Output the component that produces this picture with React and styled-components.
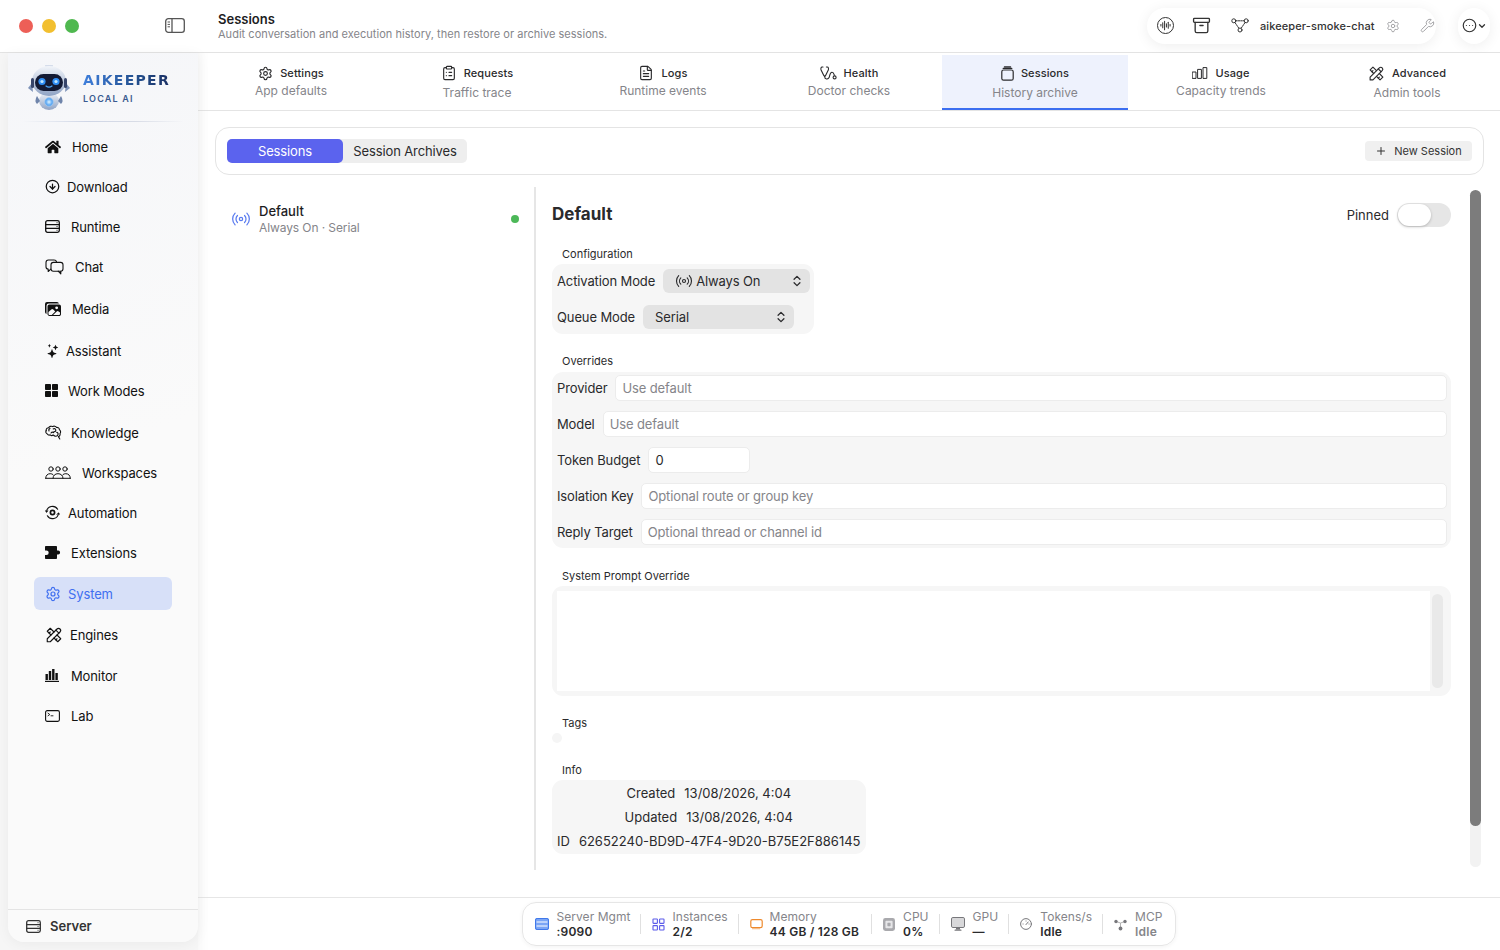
import React from "react";
import styled, { createGlobalStyle } from "styled-components";
import {
  Settings,
  ClipboardList,
  FileText,
  Plus,
  ChevronsUpDown,
  Radio,
  AudioLines,
  Archive,
  Wrench,
  CircleEllipsis,
  ChevronDown,
  CircleArrowDown,
} from "lucide-react";
import { FaHome } from "react-icons/fa";
import { IoImages } from "react-icons/io5";
import { BsStars } from "react-icons/bs";
import { TbTools } from "react-icons/tb";

const GlobalStyle = createGlobalStyle`
  html, body {
    margin: 0;
    height: 100%;
    overflow: hidden;
    background: #fff;
    font-family: Inter, "Liberation Sans", sans-serif;
    color: #1d1d1f;
  }
  * { box-sizing: border-box; }
`;

const Page = styled.div`
  height: 100vh;
  display: flex;
  flex-direction: column;
`;

const Header = styled.header`
  height: 53px;
  flex: none;
  display: flex;
  align-items: center;
  border-bottom: 1px solid #e3e3e3;
  padding: 0 10px 1px 19px;
  background: #fff;
`;

const Lights = styled.div`
  display: flex;
  gap: 9px;
  width: 146px;
`;

const Light = styled.span`
  width: 14px;
  height: 14px;
  border-radius: 50%;
  background: ${(p) => p.$color};
`;

const HeaderText = styled.div`
  margin-left: 33px;
  flex: 1;
`;

const HeaderTitle = styled.div`
  font-size: 13px;
  font-weight: 600;
  line-height: 16px;
`;

const HeaderSub = styled.div`
  font-size: 11px;
  line-height: 14px;
  letter-spacing: 0.03px;
  color: #85858a;
`;

const Pill = styled.div`
  height: 36px;
  display: flex;
  align-items: center;
  background: #fff;
  border-radius: 18px;
  box-shadow: 0 2px 14px rgba(0, 0, 0, 0.07);
`;

const ToolPill = styled(Pill)`
  width: 289px;
  padding-left: 10px;
  margin-right: 22px;
  color: #333;
`;

const MenuPill = styled(Pill)`
  width: 32px;
  justify-content: center;
  color: #333;
`;

const ChatName = styled.span`
  font-size: 11px;
  font-weight: 500;
  letter-spacing: 0.1px;
  margin: 0 11px 0 11px;
  color: #333;
`;

const CircleWave = styled.span`
  width: 17px;
  height: 17px;
  border-radius: 50%;
  border: 1.3px solid #333;
  display: flex;
  align-items: center;
  justify-content: center;
  margin-right: 18px;
`;

const ArchiveIcon = styled(Archive)`
  margin-right: 20px;
`;

const PillGear = styled(Settings)`
  margin-right: 20px;
`;

const Body = styled.div`
  flex: 1;
  min-height: 0;
  display: flex;
  background: #f6f6f6;
`;

const Sidebar = styled.aside`
  width: 190px;
  flex: none;
  margin: 0 0 8px 8px;
  display: flex;
  flex-direction: column;
  background: linear-gradient(160deg, #f5f6f9 0%, #fafafa 45%);
  border-radius: 0 0 16px 16px;
  box-shadow: 0 2px 14px rgba(0, 0, 0, 0.05);
  position: relative;
  z-index: 1;
`;

const Brand = styled.div`
  height: 68px;
  flex: none;
  display: flex;
  align-items: center;
  padding: 0 0 0 19px;
  gap: 12px;
`;

const BrandText = styled.div`
  display: flex;
  flex-direction: column;
  gap: 5px;
  margin-top: 2px;
`;

const BrandName = styled.span`
  font-family: "DejaVu Sans", Inter, sans-serif;
  font-size: 14px;
  line-height: 16px;
  font-weight: 700;
  letter-spacing: 1.3px;
  background: linear-gradient(90deg, #3f7fdc 0%, #23508f 60%, #1a2f63 100%);
  -webkit-background-clip: text;
  background-clip: text;
  color: transparent;
`;

const BrandTag = styled.span`
  font-size: 9px;
  line-height: 11px;
  font-weight: 600;
  letter-spacing: 1.2px;
  color: #3a5a90;
`;

const BrandRule = styled.div`
  height: 1px;
  flex: none;
  margin: 0 14px;
  background: linear-gradient(90deg, transparent, #cfd6e6 40%, #d8dce6 70%, transparent);
`;

const Nav = styled.nav`
  display: flex;
  flex-direction: column;
  padding: 8px 26px 0;
`;

const NavItem = styled.div`
  height: 33px;
  flex: none;
  margin-top: ${(p) => p.$gap}px;
  display: flex;
  align-items: center;
  gap: ${(p) => p.$iconGap}px;
  padding-left: 11px;
  border-radius: 6px;
  font-size: 13px;
  letter-spacing: -0.12px;
  color: ${(p) => (p.$active ? "#3f6ff0" : "#111")};
  background: ${(p) => (p.$active ? "#d7e0f8" : "transparent")};
`;

const SideFooter = styled.div`
  margin-top: auto;
  height: 33px;
  flex: none;
  border-top: 1px solid #e4e4e4;
  display: flex;
  align-items: center;
  gap: 9px;
  padding-left: 18px;
  font-size: 13px;
  font-weight: 600;
  color: #333;
`;

const Main = styled.main`
  flex: 1;
  min-width: 0;
  display: flex;
  flex-direction: column;
  background: #fff;
  box-shadow: inset 14px 0 14px -14px rgba(0, 0, 0, 0.05);
`;

const Tabs = styled.div`
  height: 58px;
  flex: none;
  display: grid;
  grid-template-columns: repeat(7, 186px);
  border-bottom: 1px solid #e4e4e4;
`;

const Tab = styled.div`
  margin-top: 2px;
  padding-top: 11px;
  height: 55px;
  display: flex;
  flex-direction: column;
  align-items: center;
  background: ${(p) => (p.$active ? "#eef2fd" : "transparent")};
  border-bottom: 2px solid ${(p) => (p.$active ? "#3b6ef0" : "transparent")};
`;

const TabTitle = styled.div`
  height: 14px;
  display: flex;
  align-items: center;
  gap: 7px;
  font-size: 11px;
  font-weight: 550;
  letter-spacing: 0.1px;
  color: #2a2a2c;
`;

const TabSub = styled.div`
  margin-top: ${(p) => (p.$low ? 6 : 4)}px;
  font-size: 12px;
  line-height: 14px;
  color: #85858a;
`;

const Content = styled.div`
  flex: 1;
  min-height: 0;
  padding: 16px 16px 0 17px;
  display: flex;
  flex-direction: column;
`;

const Toolbar = styled.div`
  height: 48px;
  flex: none;
  display: flex;
  align-items: center;
  justify-content: space-between;
  padding: 0 11px;
  border: 1px solid #e4e4e4;
  border-radius: 14px;
`;

const Segments = styled.div`
  display: flex;
  height: 24px;
  background: #eeeeee;
  border-radius: 5px;
`;

const Segment = styled.div`
  width: ${(p) => p.$width}px;
  display: flex;
  align-items: center;
  justify-content: center;
  font-size: 13px;
  letter-spacing: -0.12px;
  border-radius: 5px;
  background: ${(p) => (p.$active ? "#5b63ee" : "transparent")};
  color: ${(p) => (p.$active ? "#fff" : "#2a2a2c")};
`;

const NewButton = styled.div`
  width: 107px;
  height: 20px;
  display: flex;
  align-items: center;
  justify-content: center;
  gap: 7px;
  font-size: 11px;
  color: #333;
  background: #f0f0f0;
  border-radius: 4px;
`;

const Split = styled.div`
  margin-top: 12px;
  height: 683px;
  flex: none;
  display: flex;
`;

const ListPane = styled.div`
  width: 321px;
  flex: none;
  border-right: 2px solid #e6e6e6;
  padding: 15px 15px 0 16px;
`;

const SessionRow = styled.div`
  display: flex;
  align-items: center;
  gap: 8px;
`;

const SessionText = styled.div`
  flex: 1;
`;

const SessionName = styled.div`
  font-size: 13px;
  line-height: 18px;
  font-weight: 550;
`;

const SessionMeta = styled.div`
  font-size: 12px;
  line-height: 16px;
  letter-spacing: -0.1px;
  color: #85858a;
`;

const GreenDot = styled.span`
  width: 8px;
  height: 8px;
  border-radius: 50%;
  background: #4cb858;
`;

const Detail = styled.div`
  flex: 1;
  min-width: 0;
  padding: 16px 19px 0 16px;
`;

const DetailHead = styled.div`
  height: 24px;
  display: flex;
  align-items: center;
  gap: 8px;
`;

const DetailTitle = styled.div`
  flex: 1;
  margin-bottom: 2px;
  font-size: 17px;
  font-weight: 700;
  color: #2a2a2c;
`;

const PinLabel = styled.span`
  font-size: 13px;
  color: #2a2a2c;
`;

const Toggle = styled.div`
  width: 54px;
  height: 24px;
  padding: 1px;
  border-radius: 12px;
  background: #e6e6e6;
`;

const Knob = styled.div`
  width: 33px;
  height: 22px;
  border-radius: 11px;
  background: #fff;
  box-shadow: 0 1px 3px rgba(0, 0, 0, 0.22);
`;

const SectionLabel = styled.div`
  font-size: 11px;
  line-height: 14px;
  margin: ${(p) => p.$top}px 0 ${(p) => p.$after ?? 3}px 10px;
  color: #2a2a2c;
`;

const Group = styled.div`
  display: ${(p) => (p.$fit ? "inline-flex" : "flex")};
  flex-direction: column;
  gap: 4px;
  padding: ${(p) => (p.$fit ? "1px 0" : "0")};
  vertical-align: top;
  background: #f6f6f6;
  border-radius: 11px;
`;

const Row = styled.div`
  height: 32px;
  display: flex;
  align-items: center;
  gap: 8px;
  padding: 0 4px 0 5px;
  font-size: 13px;
  letter-spacing: -0.12px;
  color: #2a2a2c;
`;

const Select = styled.div`
  width: ${(p) => p.$width}px;
  height: 24px;
  display: flex;
  align-items: center;
  gap: 3px;
  padding: 0 6px 0 12px;
  border-radius: 6px;
  background: #e3e3e3;
  font-size: 13px;
  span { flex: 1; }
`;

const Field = styled.input`
  flex: ${(p) => (p.$narrow ? "none" : 1)};
  width: ${(p) => (p.$narrow ? "102px" : "auto")};
  min-width: 0;
  height: 26px;
  padding: 0 6px;
  border: 1px solid #ececec;
  border-radius: 5px;
  background: #fff;
  outline: none;
  font-family: inherit;
  font-size: 13px;
  letter-spacing: -0.12px;
  color: #2a2a2c;
  &::placeholder { color: #85858a; opacity: 1; }
`;

const PromptBox = styled.div`
  height: 110px;
  display: flex;
  gap: 2px;
  padding: 5px 8px 5px 5px;
  background: #f6f6f6;
  border-radius: 11px;
`;

const PromptArea = styled.textarea`
  flex: 1;
  border: none;
  resize: none;
  outline: none;
  background: #fff;
`;

const PromptScroll = styled.div`
  width: 11px;
  margin: 3px 0;
  border-radius: 6px;
  background: #e9e9e9;
`;

const TagDot = styled.div`
  width: 10px;
  height: 10px;
  border-radius: 50%;
  background: #f5f5f5;
`;

const InfoBox = styled.div`
  display: inline-flex;
  flex-direction: column;
  vertical-align: top;
  padding: 1px 5px;
  background: #f6f6f6;
  border-radius: 11px;
`;

const InfoRow = styled.div`
  height: 24px;
  display: flex;
  align-items: center;
  justify-content: center;
  gap: 9px;
  font-size: 13px;
  color: #2a2a2c;
`;

const ScrollTrack = styled.div`
  width: 11px;
  flex: none;
  height: 677px;
  margin: 3px 3px 0 0;
  border-radius: 6px;
  background: #f2f2f2;
`;

const ScrollThumb = styled.div`
  height: 636px;
  border-radius: 6px;
  background: #7c7c7c;
`;

const StatusBar = styled.footer`
  height: 53px;
  flex: none;
  margin-top: auto;
  border-top: 1px solid #e6e6e6;
  display: flex;
  justify-content: center;
  padding-top: 4px;
`;

const StatusPill = styled.div`
  height: 44px;
  display: flex;
  align-items: center;
  padding: 0 12px;
  border: 1px solid #e6e6e6;
  border-radius: 14px;
  box-shadow: 0 1px 4px rgba(0, 0, 0, 0.05);
`;

const StatusItem = styled.div`
  display: flex;
  align-items: center;
  gap: ${(p) => p.$gap}px;
`;

const StatusSep = styled.span`
  width: 1px;
  height: 20px;
  margin: 0 11px 0 ${(p) => p.$lead}px;
  background: #e0e0e0;
`;

const StatusText = styled.div`
  display: flex;
  flex-direction: column;
  font-size: 12px;
  line-height: 15px;
`;

const StatusLabel = styled.span`
  letter-spacing: 0.05px;
  color: #85858a;
`;

const StatusValue = styled.span`
  font-weight: 600;
  letter-spacing: 0.2px;
  color: ${(p) => (p.$muted ? "#85858a" : "#2a2a2c")};
`;

const IconSvg = styled.svg`
  flex: none;
`;

const FlippedStars = styled(BsStars)`
  flex: none;
  transform: scaleX(-1);
`;

const Glyph = ({ w = 16, h = 16, children, ...rest }) => (
  <IconSvg
    width={w}
    height={h}
    viewBox={`0 0 ${w} ${h}`}
    fill="none"
    stroke="currentColor"
    strokeWidth="1.3"
    strokeLinecap="round"
    strokeLinejoin="round"
    {...rest}
  >
    {children}
  </IconSvg>
);

const RobotLogo = () => (
  <IconSvg width="44" height="48" viewBox="0 0 44 48">
    <defs>
      <linearGradient id="shell" x1="0" y1="0" x2="0" y2="1">
        <stop offset="0" stopColor="#f2f5fa" />
        <stop offset="1" stopColor="#8fa3c4" />
      </linearGradient>
      <radialGradient id="core">
        <stop offset="0" stopColor="#dff4ff" />
        <stop offset="1" stopColor="#2f8ef0" />
      </radialGradient>
    </defs>
    <path d="M5 20 L1 25 L6 29Z" fill="#7e93b8" />
    <path d="M39 20 L43 25 L38 29Z" fill="#7e93b8" />
    <ellipse cx="22" cy="38" rx="10" ry="9" fill="url(#shell)" />
    <path d="M10 33 q-3 5 0 8 l3 -3z" fill="#6f84aa" />
    <path d="M34 33 q3 5 0 8 l-3 -3z" fill="#6f84aa" />
    <path d="M18 2 h8 l-1 5 h-6z" fill="#d5dcea" />
    <ellipse cx="22" cy="18" rx="17" ry="15" fill="url(#shell)" />
    <rect x="4" y="15" width="3" height="10" rx="1.5" fill="#37456a" />
    <rect x="37" y="15" width="3" height="10" rx="1.5" fill="#37456a" />
    <rect x="8" y="11" width="28" height="17" rx="8.5" fill="#131a34" />
    <circle cx="15" cy="18.5" r="3.6" fill="#2f8ef5" />
    <circle cx="15" cy="18.5" r="1.6" fill="#bfe6ff" />
    <circle cx="29" cy="18.5" r="3.6" fill="#2f8ef5" />
    <circle cx="29" cy="18.5" r="1.6" fill="#bfe6ff" />
    <path d="M19 23 q3 2.4 6 0" stroke="#4aa4f5" strokeWidth="1.2" fill="none" strokeLinecap="round" />
    <circle cx="22" cy="39" r="4.2" fill="url(#core)" stroke="#9fc8ef" />
  </IconSvg>
);

const RowsIcon = () => (
  <Glyph w={15} h={13}>
    <rect x="0.7" y="0.7" width="13.6" height="11.6" rx="1.8" />
    <path d="M0.7 4.6h13.6M0.7 8.4h13.6" />
    <path d="M12 2.7h.1M12 6.5h.1M12 10.3h.1" strokeWidth="1" />
  </Glyph>
);

const BubblesIcon = () => (
  <Glyph w={19} h={16} strokeWidth="1.1">
    <path d="M11.5 2.8C11.3 1.6 10.3 1 9 1H3.4C1.9 1 1 2 1 3.4v4.4c0 1.3.9 2.3 2.2 2.3v2.4l2.6-2.4" />
    <rect x="6" y="3.4" width="12" height="8.8" rx="2.4" />
    <path d="M13.2 12.2l2.6 2.6v-2.6" />
  </Glyph>
);

const GridIcon = () => (
  <IconSvg width="13" height="13" viewBox="0 0 13 13" fill="#111">
    <rect width="6" height="6" rx="0.8" />
    <rect x="7" width="6" height="6" rx="0.8" />
    <rect y="7" width="6" height="6" rx="0.8" />
    <rect x="7" y="7" width="6" height="6" rx="0.8" />
  </IconSvg>
);

const BrainIcon = () => (
  <Glyph w={17} h={15} strokeWidth="1.1">
    <path d="M1.2 5.6C.9 3.6 2.4 2.8 3.6 2.8 4.2 1.4 6.2.8 7.6 1.6c1.2-.8 3.2-.6 3.8.8 1.6-.2 3 .8 3 2.4 1.4.8 1.6 2.8.6 3.8.4 1.4-.4 2.8-1.6 3l1.4 2.4" />
    <path d="M1.2 5.6C.4 6.8 1 8.6 2.4 9c.4 1 1.8 1.4 2.8.8.8.8 2.2.8 3 .2 1 1 1.6 1.4 2.8 1.2 1.2-.2 2-.8 2-1.8" />
    <path d="M5 3.6c-1 .4-1.4 1.4-1 2.4M8.2 4c1-.8 2.6-.2 2.6 1.2 0 1.2-1 1.6-2 1.6M6 8c.6-.8 1.8-1 2.6-.4M11.8 7.4c.8 0 1.4.6 1.2 1.4" />
  </Glyph>
);

const PeopleIcon = () => (
  <Glyph w={26} h={13} strokeWidth="1">
    <circle cx="6" cy="3" r="2.2" />
    <circle cx="13" cy="3" r="2.2" />
    <circle cx="20" cy="3" r="2.2" />
    <path d="M0.7 12.3c0-3 2-4.6 4.5-4.6 1.4 0 2.6.5 3.3 1.4M8 12.3c0-3 2.2-4.6 5-4.6s5 1.6 5 4.6M17.5 9.1c.7-.9 1.9-1.4 3.3-1.4 2.5 0 4.5 1.6 4.5 4.6M.7 12.3h24.6" />
  </Glyph>
);

const AutomationIcon = () => (
  <Glyph w={15} h={15} strokeWidth="1.2">
    <path d="M1.5 6.8A6 6 0 0 1 12.6 4.2M13.5 8.2A6 6 0 0 1 2.4 10.8" />
    <path d="M0.3 5.6l1.2 1.5 1.4-1.3M12.1 9.4l1.4-1.4 1.2 1.4" strokeWidth="1" />
    <circle cx="7.5" cy="7.5" r="2.1" strokeWidth="1.7" />
  </Glyph>
);

const PuzzleIcon = () => (
  <IconSvg width="16" height="13" viewBox="0 0 16 13" fill="#111">
    <path d="M0.8 0h10.4c.4 0 .8.4.8.8V4.6h1.2a1.9 1.9 0 1 1 0 3.8H12v3.8c0 .4-.4.8-.8.8H.8a.8.8 0 0 1-.8-.8V9h1.4a2 2 0 1 0 0-4.6H0V.8C0 .4.4 0 .8 0z" />
  </IconSvg>
);

const BarsIcon = () => (
  <IconSvg width="14" height="13" viewBox="0 0 14 13" fill="#111">
    <rect x="0.5" y="5" width="2.4" height="6" />
    <rect x="3.8" y="2" width="2.4" height="9" />
    <rect x="7.1" y="0" width="2.4" height="11" />
    <rect x="10.4" y="4" width="2.4" height="7" />
    <rect y="11.8" width="14" height="1.2" />
  </IconSvg>
);

const TerminalIcon = () => (
  <Glyph w={15} h={12} strokeWidth="1.1">
    <rect x="0.6" y="0.6" width="13.8" height="10.8" rx="1.6" />
    <path d="M3 3.2l1.8 1.3L3 5.8M6 5.8h2" strokeWidth="0.9" />
  </Glyph>
);

const StackBoxIcon = () => (
  <Glyph w={13} h={15} strokeWidth="1.2">
    <rect x="0.8" y="4" width="11.4" height="10.2" rx="1.8" />
    <path d="M2.2 2.4h8.6M3.4 0.8h6.2" />
  </Glyph>
);

const UsageIcon = () => (
  <Glyph w={16} h={12} strokeWidth="1">
    <rect x="0.6" y="5" width="3.4" height="6.4" />
    <rect x="6" y="2.4" width="3.4" height="9" />
    <rect x="11.4" y="0.6" width="3.4" height="10.8" />
  </Glyph>
);

const HealthIcon = () => (
  <Glyph w={17} h={15} strokeWidth="1.1">
    <path d="M3 1H2.2C1 1 .6 2.5 1.1 4l2.7 5.6c.5 1 1.3 1 1.8 0L8.3 4c.5-1.5.1-3-1.1-3h-.8" />
    <path d="M4.7 10v.8c0 2.6 3.4 3 4.4.8.8-1.7.6-5.4 2.9-5.4 1.8 0 1.9 1.6 2.3 3" />
    <circle cx="14.6" cy="11.4" r="1.5" />
  </Glyph>
);

const NodesIcon = () => (
  <Glyph w={18} h={15} strokeWidth="1">
    <circle cx="2.8" cy="2.8" r="2" />
    <circle cx="15.2" cy="2.8" r="2" />
    <circle cx="9" cy="12" r="2" />
    <path d="M4.8 2.8h8.4M3.9 4.5l4 5.8M14.1 4.5l-4 5.8" strokeDasharray="1.5 1" />
  </Glyph>
);

const SidePanelIcon = () => (
  <Glyph w={20} h={15} color="#555">
    <rect x="0.7" y="0.7" width="18.6" height="13.6" rx="2.6" />
    <path d="M7 0.7v13.6" />
    <path d="M3 4h1.6M3 6.4h1.6M3 8.8h1.6" strokeWidth="1" />
  </Glyph>
);

const ServerBlueIcon = () => (
  <IconSvg width="14" height="12" viewBox="0 0 14 12">
    <rect width="14" height="12" rx="2" fill="#7ba5f5" />
    <path d="M1.5 4h11M1.5 8h11" stroke="#fff" strokeWidth="1" />
    <rect x="0.5" y="0.5" width="13" height="11" rx="1.6" fill="none" stroke="#3f78ea" />
  </IconSvg>
);

const InstancesIcon = () => (
  <Glyph w={13} h={13} strokeWidth="1.1" color="#5b5bea">
    <rect x="1" y="1" width="4.4" height="4.4" rx="0.6" />
    <rect x="7.6" y="1" width="4.4" height="4.4" rx="0.6" />
    <rect x="1" y="7.6" width="4.4" height="4.4" rx="0.6" />
    <rect x="7.6" y="7.6" width="4.4" height="4.4" rx="0.6" />
  </Glyph>
);

const MemoryIcon = () => (
  <Glyph w={13} h={12} strokeWidth="1.2" color="#ee8a2d">
    <rect x="0.8" y="1.6" width="11.4" height="8" rx="1.6" />
    <path d="M3 11v-1M5 11v-1M7 11v-1M9 11v-1" strokeWidth="0.8" />
  </Glyph>
);

const CpuIcon = () => (
  <IconSvg width="12" height="13" viewBox="0 0 12 13">
    <rect width="12" height="13" rx="2.4" fill="#a9a9ad" />
    <rect x="2.4" y="2.8" width="7.2" height="7.4" rx="1" fill="#e6e6e8" />
    <rect x="4.4" y="4.8" width="3.2" height="3.4" rx="0.6" fill="#a9a9ad" />
  </IconSvg>
);

const GpuIcon = () => (
  <IconSvg width="14" height="14" viewBox="0 0 14 14">
    <rect x="0.5" y="0.5" width="13" height="10" rx="1.4" fill="#d8d8da" stroke="#77777b" />
    <rect x="5" y="11" width="4" height="1.6" fill="#77777b" />
    <rect x="3.5" y="12.6" width="7" height="1.2" rx="0.6" fill="#77777b" />
  </IconSvg>
);

const GaugeIcon = () => (
  <Glyph w={12} h={12} strokeWidth="1" color="#77777b">
    <circle cx="6" cy="6" r="5.4" />
    <path d="M6 6.6l2.2-2.6" />
    <path d="M3 6h.1M6 3h.1M9 6h.1" />
  </Glyph>
);

const McpIcon = () => (
  <IconSvg width="13" height="13" viewBox="0 0 13 13">
    <path d="M2 3.5L6.5 5M11 3.5L6.5 5M6.5 5v5" stroke="#aaa" strokeWidth="0.9" fill="none" />
    <circle cx="2" cy="3.5" r="1.7" fill="#77777b" />
    <circle cx="11" cy="3.5" r="1.7" fill="#77777b" />
    <circle cx="6.5" cy="10.5" r="1.9" fill="#77777b" />
  </IconSvg>
);

const navItems = [
  { label: "Home", gap: 0, iconGap: 11, icon: <FaHome size={16} color="#111" /> },
  { label: "Download", gap: 7, iconGap: 7, icon: <CircleArrowDown size={15} color="#111" strokeWidth={2} /> },
  { label: "Runtime", gap: 7, iconGap: 11, icon: <RowsIcon /> },
  { label: "Chat", gap: 7, iconGap: 11, icon: <BubblesIcon /> },
  { label: "Media", gap: 9, iconGap: 11, icon: <IoImages size={16} color="#111" /> },
  { label: "Assistant", gap: 9, iconGap: 7, icon: <FlippedStars size={14} color="#111" /> },
  { label: "Work Modes", gap: 7, iconGap: 10, icon: <GridIcon /> },
  { label: "Knowledge", gap: 9, iconGap: 9, icon: <BrainIcon /> },
  { label: "Workspaces", gap: 7, iconGap: 11, icon: <PeopleIcon /> },
  { label: "Automation", gap: 7, iconGap: 8, icon: <AutomationIcon /> },
  { label: "Extensions", gap: 7, iconGap: 10, icon: <PuzzleIcon /> },
  { label: "System", gap: 8, iconGap: 7, active: true, icon: <Settings size={16} color="#3f6ff0" strokeWidth={1.8} /> },
  { label: "Engines", gap: 8, iconGap: 7, icon: <TbTools size={18} color="#111" strokeWidth={1.5} /> },
  { label: "Monitor", gap: 8, iconGap: 12, icon: <BarsIcon /> },
  { label: "Lab", gap: 7, iconGap: 11, icon: <TerminalIcon /> },
];

const tabs = [
  { title: "Settings", sub: "App defaults", icon: <Settings size={15} strokeWidth={1.8} /> },
  { title: "Requests", sub: "Traffic trace", low: true, icon: <ClipboardList size={16} strokeWidth={1.7} /> },
  { title: "Logs", sub: "Runtime events", icon: <FileText size={16} strokeWidth={1.7} /> },
  { title: "Health", sub: "Doctor checks", icon: <HealthIcon /> },
  { title: "Sessions", sub: "History archive", low: true, active: true, icon: <StackBoxIcon /> },
  { title: "Usage", sub: "Capacity trends", icon: <UsageIcon /> },
  { title: "Advanced", sub: "Admin tools", low: true, icon: <TbTools size={17} strokeWidth={1.6} /> },
];

const overrides = [
  { label: "Provider", placeholder: "Use default" },
  { label: "Model", placeholder: "Use default" },
  { label: "Token Budget", value: "0", narrow: true },
  { label: "Isolation Key", placeholder: "Optional route or group key" },
  { label: "Reply Target", placeholder: "Optional thread or channel id" },
];

const info = [
  ["Created", "13/08/2026, 4:04"],
  ["Updated", "13/08/2026, 4:04"],
  ["ID", "62652240-BD9D-47F4-9D20-B75E2F886145"],
];

const stats = [
  { label: "Server Mgmt", value: ":9090", gap: 7, lead: 10, icon: <ServerBlueIcon /> },
  { label: "Instances", value: "2/2", gap: 7, lead: 10, icon: <InstancesIcon /> },
  { label: "Memory", value: "44 GB / 128 GB", gap: 7, lead: 10, icon: <MemoryIcon /> },
  { label: "CPU", value: "0%", gap: 8, lead: 12, icon: <CpuIcon /> },
  { label: "GPU", value: "—", gap: 8, lead: 10, icon: <GpuIcon /> },
  { label: "Tokens/s", value: "Idle", gap: 8, lead: 10, icon: <GaugeIcon /> },
  { label: "MCP", value: "Idle", gap: 8, lead: 10, muted: true, icon: <McpIcon /> },
];

export default function App() {
  return (
    <Page>
      <GlobalStyle />
      <Header>
        <Lights>
          <Light $color="#ed5f57" />
          <Light $color="#f2bf2f" />
          <Light $color="#4fb84f" />
        </Lights>
        <SidePanelIcon />
        <HeaderText>
          <HeaderTitle>Sessions</HeaderTitle>
          <HeaderSub>
            Audit conversation and execution history, then restore or archive sessions.
          </HeaderSub>
        </HeaderText>
        <ToolPill>
          <CircleWave>
            <AudioLines size={11} strokeWidth={2.2} />
          </CircleWave>
          <ArchiveIcon size={19} strokeWidth={1.7} />
          <NodesIcon />
          <ChatName>aikeeper-smoke-chat</ChatName>
          <PillGear size={14} color="#a3a3a6" strokeWidth={1.7} />
          <Wrench size={15} color="#a3a3a6" strokeWidth={1.6} />
        </ToolPill>
        <MenuPill>
          <CircleEllipsis size={15} strokeWidth={1.9} />
          <ChevronDown size={10} strokeWidth={3} />
        </MenuPill>
      </Header>
      <Body>
        <Sidebar>
          <Brand>
            <RobotLogo />
            <BrandText>
              <BrandName>AIKEEPER</BrandName>
              <BrandTag>LOCAL AI</BrandTag>
            </BrandText>
          </Brand>
          <BrandRule />
          <Nav>
            {navItems.map((item) => (
              <NavItem
                key={item.label}
                $gap={item.gap}
                $iconGap={item.iconGap}
                $active={item.active}
              >
                {item.icon}
                {item.label}
              </NavItem>
            ))}
          </Nav>
          <SideFooter>
            <RowsIcon />
            Server
          </SideFooter>
        </Sidebar>
        <Main>
          <Tabs>
            {tabs.map((tab) => (
              <Tab key={tab.title} $active={tab.active}>
                <TabTitle>
                  {tab.icon}
                  {tab.title}
                </TabTitle>
                <TabSub $low={tab.low}>{tab.sub}</TabSub>
              </Tab>
            ))}
          </Tabs>
          <Content>
            <Toolbar>
              <Segments>
                <Segment $width={116} $active>
                  Sessions
                </Segment>
                <Segment $width={124}>Session Archives</Segment>
              </Segments>
              <NewButton>
                <Plus size={12} strokeWidth={2} />
                New Session
              </NewButton>
            </Toolbar>
            <Split>
              <ListPane>
                <SessionRow>
                  <Radio size={20} color="#5b7cf0" strokeWidth={1.5} />
                  <SessionText>
                    <SessionName>Default</SessionName>
                    <SessionMeta>Always On · Serial</SessionMeta>
                  </SessionText>
                  <GreenDot />
                </SessionRow>
              </ListPane>
              <Detail>
                <DetailHead>
                  <DetailTitle>Default</DetailTitle>
                  <PinLabel>Pinned</PinLabel>
                  <Toggle>
                    <Knob />
                  </Toggle>
                </DetailHead>
                <SectionLabel $top={20}>Configuration</SectionLabel>
                <Group $fit>
                  <Row>
                    Activation Mode
                    <Select $width={147}>
                      <Radio size={18} strokeWidth={1.5} />
                      <span>Always On</span>
                      <ChevronsUpDown size={14} strokeWidth={2.2} />
                    </Select>
                  </Row>
                  <Row>
                    Queue Mode
                    <Select $width={151}>
                      <span>Serial</span>
                      <ChevronsUpDown size={14} strokeWidth={2.2} />
                    </Select>
                  </Row>
                </Group>
                <SectionLabel $top={20} $after={4}>
                  Overrides
                </SectionLabel>
                <Group>
                  {overrides.map((row) => (
                    <Row key={row.label}>
                      {row.label}
                      <Field
                        readOnly
                        placeholder={row.placeholder}
                        value={row.value || ""}
                        $narrow={row.narrow}
                      />
                    </Row>
                  ))}
                </Group>
                <SectionLabel $top={21}>System Prompt Override</SectionLabel>
                <PromptBox>
                  <PromptArea readOnly />
                  <PromptScroll />
                </PromptBox>
                <SectionLabel $top={20}>Tags</SectionLabel>
                <TagDot />
                <SectionLabel $top={20}>Info</SectionLabel>
                <InfoBox>
                  {info.map(([label, value]) => (
                    <InfoRow key={label}>
                      <span>{label}</span>
                      <span>{value}</span>
                    </InfoRow>
                  ))}
                </InfoBox>
              </Detail>
              <ScrollTrack>
                <ScrollThumb />
              </ScrollTrack>
            </Split>
          </Content>
          <StatusBar>
            <StatusPill>
              {stats.map((stat, i) => (
                <React.Fragment key={stat.label}>
                  {i > 0 && <StatusSep $lead={stat.lead} />}
                  <StatusItem $gap={stat.gap}>
                    {stat.icon}
                    <StatusText>
                      <StatusLabel>{stat.label}</StatusLabel>
                      <StatusValue $muted={stat.muted}>{stat.value}</StatusValue>
                    </StatusText>
                  </StatusItem>
                </React.Fragment>
              ))}
            </StatusPill>
          </StatusBar>
        </Main>
      </Body>
    </Page>
  );
}
